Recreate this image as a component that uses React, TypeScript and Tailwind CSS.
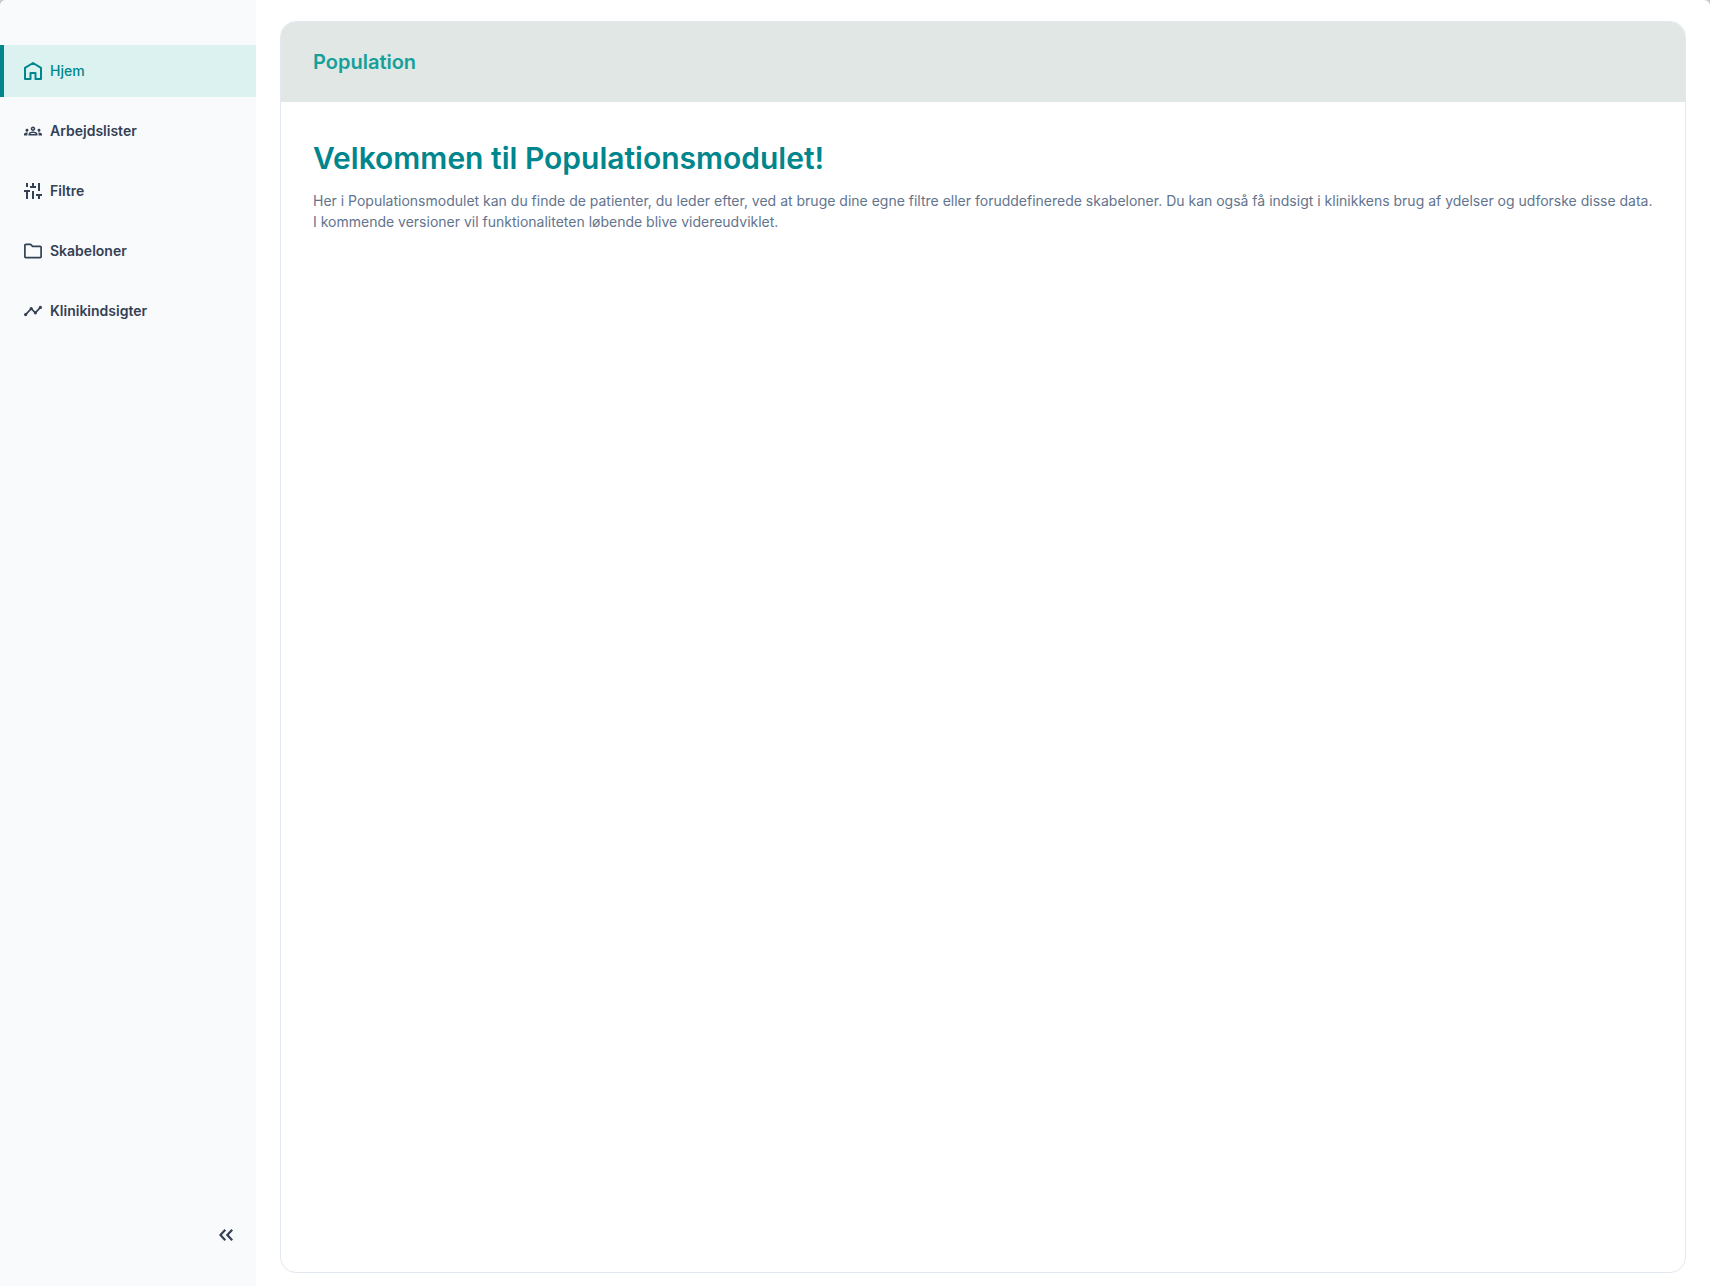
import type { ReactNode } from 'react';
import { MdOutlineGroups } from 'react-icons/md';

function HomeIcon() {
  return (
    <svg viewBox="0 0 18 18" className="size-[18px]" fill="none" stroke="currentColor" strokeWidth="2" strokeLinejoin="round" aria-hidden="true">
      <path d="M6.5 17H1V5.8L9 1l8 4.8V17h-5.5v-6h-5z" />
    </svg>
  );
}

function FilterIcon() {
  return (
    <svg viewBox="0 0 18 18" className="size-[18px]" fill="none" stroke="currentColor" strokeWidth="2" aria-hidden="true">
      <path d="M3 1v4M0 9h6M3 9v8M9 1v4M6 5h6M9 9v8M15 1v8M12 13h6M15 13v4" />
    </svg>
  );
}

function FolderIcon() {
  return (
    <svg viewBox="0 0 18 18" className="size-[18px]" fill="none" stroke="currentColor" strokeWidth="1.7" strokeLinejoin="round" aria-hidden="true">
      <path d="M1.8 2.3H6.6L8.6 4.3H16.2Q17.1 4.3 17.1 5.2V14.8Q17.1 15.7 16.2 15.7H1.8Q.9 15.7 .9 14.8V3.2Q.9 2.3 1.8 2.3z" />
    </svg>
  );
}

function TrendIcon() {
  return (
    <svg viewBox="0 0 18 18" className="size-[18px]" fill="none" stroke="currentColor" strokeWidth="1.7" aria-hidden="true">
      <path d="M1.6 12.6L7.2 6.6L11.4 10.8L16.4 5.4" />
      <g fill="currentColor" stroke="none">
        <circle cx="1.6" cy="12.6" r="1.6" />
        <circle cx="7.2" cy="6.6" r="1.6" />
        <circle cx="11.4" cy="10.8" r="1.6" />
        <circle cx="16.4" cy="5.4" r="1.6" />
      </g>
    </svg>
  );
}

type Item = { label: string; icon: ReactNode; active?: boolean };

const items: Item[] = [
  { label: 'Hjem', icon: <HomeIcon />, active: true },
  { label: 'Arbejdslister', icon: <MdOutlineGroups className="size-[18px]" aria-hidden="true" /> },
  { label: 'Filtre', icon: <FilterIcon /> },
  { label: 'Skabeloner', icon: <FolderIcon /> },
  { label: 'Klinikindsigter', icon: <TrendIcon /> },
];

function Sidebar() {
  return (
    <aside className="flex w-64 shrink-0 flex-col justify-between bg-[#f9fafc] pt-[45px] pb-[41px]">
      <nav className="flex flex-col gap-2">
        {items.map(({ label, icon, active }) => (
          <a
            key={label}
            href="#"
            aria-current={active ? 'page' : undefined}
            className={
              active
                ? 'flex h-13 items-center gap-2 border-l-4 border-[#00868c] bg-[#dcf2f0] pl-5 text-sm font-medium text-[#00868c]'
                : 'flex h-13 items-center gap-2 border-l-4 border-transparent pl-5 text-sm font-semibold text-[#334155]'
            }
          >
            {icon}
            {label}
          </a>
        ))}
      </nav>
      <button type="button" aria-label="Skjul menu" className="mr-5 flex size-5 items-center justify-center self-end text-[#334155]">
        <svg viewBox="0 0 14 12" className="h-3 w-3.5" fill="none" stroke="currentColor" strokeWidth="2.2" aria-hidden="true">
          <path d="M6.3 .8L1.4 6l4.9 5.2M13.2 .8L8.3 6l4.9 5.2" />
        </svg>
      </button>
    </aside>
  );
}

export default function App() {
  return (
    <div className="min-h-screen bg-[#cbcbcb] font-[Inter,sans-serif]">
      <div className="flex min-h-screen overflow-hidden rounded-t-md bg-white">
        <Sidebar />
        <main className="flex min-w-0 grow flex-col px-6 pt-[21px] pb-[13px]">
          <section className="grow overflow-hidden rounded-2xl border border-slate-200">
            <header className="flex h-20 items-center bg-[#e0e7e4] px-8">
              <h2 className="text-xl font-semibold text-[#16a09a]">Population</h2>
            </header>
            <div className="px-8 pt-9">
              <h1 className="text-3xl leading-10 font-semibold text-[#00868c]">Velkommen til Populationsmodulet!</h1>
              <p className="mt-3 text-sm leading-[21px] text-slate-500">
                Her i Populationsmodulet kan du finde de patienter, du leder efter, ved at bruge dine egne filtre eller foruddefinerede skabeloner. Du kan også få indsigt i klinikkens brug af ydelser og udforske disse data.
                <br />I kommende versioner vil funktionaliteten løbende blive videreudviklet.
              </p>
            </div>
          </section>
        </main>
      </div>
    </div>
  );
}
